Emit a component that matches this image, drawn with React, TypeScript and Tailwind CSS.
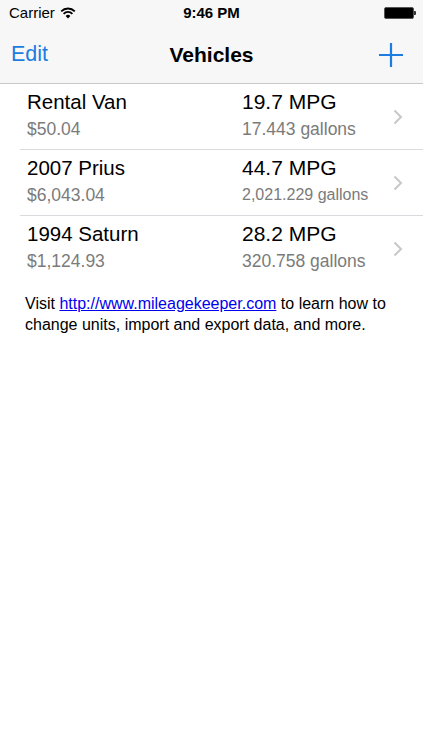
import { FC } from 'react'

type Vehicle = {
  name: string
  cost: string
  mpg: string
  gallons: string
  small?: boolean
}

const vehicles: Vehicle[] = [
  { name: 'Rental Van', cost: '$50.04', mpg: '19.7 MPG', gallons: '17.443 gallons' },
  { name: '2007 Prius', cost: '$6,043.04', mpg: '44.7 MPG', gallons: '2,021.229 gallons', small: true },
  { name: '1994 Saturn', cost: '$1,124.93', mpg: '28.2 MPG', gallons: '320.758 gallons' },
]

const Wifi: FC = () => (
  <svg width="16" height="12" viewBox="0 0 16 12">
    <path d="M8 11.5 L5.6 8.9 A3.4 3.4 0 0 1 10.4 8.9 Z" fill="#000" />
    <path d="M3.6 6.8 A6.2 6.2 0 0 1 12.4 6.8" stroke="#000" strokeWidth="1.8" fill="none" />
    <path d="M1.2 4.3 A9.6 9.6 0 0 1 14.8 4.3" stroke="#000" strokeWidth="1.8" fill="none" />
  </svg>
)

const Battery: FC = () => (
  <div className="flex items-center">
    <div className="h-[12px] w-[30px] rounded-[2px] border border-[#555] bg-black" />
    <div className="h-[4px] w-[2px] rounded-r-[1px] bg-[#333]" />
  </div>
)

const Chevron: FC = () => (
  <svg width="10" height="16" viewBox="0 0 10 16">
    <path d="M1.5 1.5 L8 8 L1.5 14.5" stroke="#c7c7cc" strokeWidth="2" fill="none" />
  </svg>
)

const App: FC = () => {
  return (
    <div
      className="min-h-screen w-[423px] bg-white text-black"
      style={{ fontFamily: '"Liberation Sans", Arial, sans-serif' }}
    >
      <div className="bg-[#f7f7f7]">
        {/* status bar */}
        <div className="relative flex h-[26px] items-center pl-[9px] pr-[7px] text-[15px]">
          <div className="flex items-center gap-[5px]">
            <span>Carrier</span>
            <Wifi />
          </div>
          <span className="absolute left-1/2 -translate-x-1/2 font-bold">9:46 PM</span>
          <div className="ml-auto">
            <Battery />
          </div>
        </div>

        {/* nav bar */}
        <div className="relative flex h-[58px] items-center border-b border-[#c8c7cc] px-[11px]">
          <span className="text-[21.5px] text-[#1b7ce2]">Edit</span>
          <span className="absolute left-1/2 -translate-x-1/2 text-[21px] font-bold">Vehicles</span>
          <svg className="ml-auto mr-[9px]" width="24" height="24" viewBox="0 0 24 24">
            <path d="M12 0 V24 M0 12 H24" stroke="#1b7ce2" strokeWidth="2.2" />
          </svg>
        </div>
      </div>

      <ul className="pl-[20px]">
        {vehicles.map((v, i) => (
          <li
            key={v.name}
            className={`flex h-[66px] items-start pl-[7px] ${i < vehicles.length - 1 ? 'border-b border-[#d9d9de]' : ''}`}
          >
            <div className="w-[215px] pt-[6px]">
              <div className="text-[20.5px] leading-[24px]">{v.name}</div>
              <div className="mt-[5px] text-[17.5px] leading-[20px] text-[#7b7b7b]">{v.cost}</div>
            </div>
            <div className="flex-1 pt-[6px]">
              <div className="text-[21px] leading-[24px]">{v.mpg}</div>
              <div
                className={`mt-[5px] leading-[20px] text-[#7b7b7b] ${v.small ? 'text-[16px]' : 'text-[17.5px]'}`}
              >
                {v.gallons}
              </div>
            </div>
            <div className="self-center pr-[20px]">
              <Chevron />
            </div>
          </li>
        ))}
      </ul>

      <p className="mt-[11px] px-[25px] text-[16px] leading-[21px]">
        Visit{' '}
        <a href="#" className="text-[#0000ee] underline">
          http://www.mileagekeeper.com
        </a>{' '}
        to learn how to change units, import and export data, and more.
      </p>
    </div>
  )
}

export default App
